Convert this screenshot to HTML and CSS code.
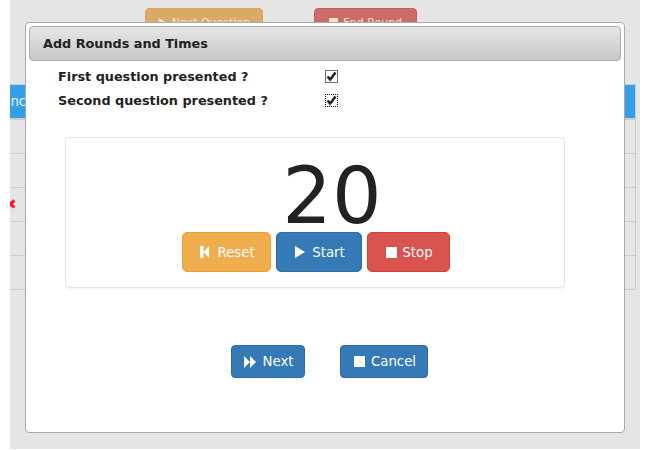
FILE: index.html
```html
<!DOCTYPE html>
<html lang="en">
<head>
<meta charset="utf-8">
<title>Add Rounds and Times</title>
<link rel="stylesheet" href="styles.css">
</head>
<body>
<div class="page">
  <div class="top-actions">
    <button class="btn dim dim-warning wide"><svg class="ico" viewBox="0 0 12 12"><path d="M1 0l10 6-10 6z"/></svg>Next Question</button>
    <button class="btn dim dim-danger"><svg class="ico" viewBox="0 0 12 12"><path d="M0 0h12v12H0z"/></svg>End Round</button>
  </div>
  <div class="table">
    <div class="table-head">Function</div>
    <div class="table-row"></div>
    <div class="table-row"></div>
    <div class="table-row"><span class="remove">&#10006;</span></div>
    <div class="table-row"></div>
    <div class="table-row"></div>
  </div>
</div>
<div class="dialog">
  <h1 class="dialog-title">Add Rounds and Times</h1>
  <div class="questions">
    <div class="question"><span class="question-label">First question presented ?</span>
      <span class="check"><svg viewBox="0 0 11 11"><path d="M1.500 5.500l2.700 3 5.300-7" /></svg></span></div>
    <div class="question"><span class="question-label">Second question presented ?</span>
      <span class="check focus"><svg viewBox="0 0 11 11"><path d="M1.500 5.500l2.700 3 5.300-7" /></svg></span></div>
  </div>
  <div class="timer">
    <div class="count">20</div>
    <div class="timer-actions">
      <button class="btn btn-warning reset"><svg class="ico ico-reset" viewBox="0 0 9 12"><path d="M0 0h3.500v12H0zM3.500 6L9 0v12z"/></svg>Reset</button>
      <button class="btn btn-primary start"><svg class="ico ico-play" viewBox="0 0 10 12"><path d="M0 0l10 6-10 6z"/></svg>Start</button>
      <button class="btn btn-danger stop"><svg class="ico ico-stop" viewBox="0 0 11 11"><path d="M0 0h11v11H0z"/></svg>Stop</button>
    </div>
  </div>
  <div class="dialog-actions">
    <button class="btn btn-primary small next"><svg class="ico ico-next" viewBox="0 0 12 12"><path d="M0 0l6 6-6 6zM6 0l6 6-6 6z"/></svg>Next</button>
    <button class="btn btn-primary small cancel"><svg class="ico ico-stop" viewBox="0 0 11 11"><path d="M0 0h11v11H0z"/></svg>Cancel</button>
  </div>
</div>
</body>
</html>
```
FILE: styles.css
```css
* { box-sizing: border-box; }
html, body { margin: 0; height: 100%; background: #fff; overflow: hidden; }
body { font-family: "DejaVu Sans", sans-serif; font-size: 12.8px; color: #222; }

.page { margin-left: 10px; width: 630px; height: 449px; background: #e5e5e5; padding-top: 8px; overflow: hidden; }
.top-actions { display: flex; padding-left: 135px; gap: 51px; }
.table { margin: 42px 4px 0 -20px; border: 1px solid #ccc; }
.table-head { height: 34px; background: #349fe8; color: #e8f4fc; font-size: 13.33px; line-height: 33px; padding-left: 4px; white-space: nowrap; overflow: hidden; border-bottom: 1px solid #cfcfcf; }
.table-row { height: 34px; border-top: 1px solid #cdcdcd; position: relative; }
.table-row:first-of-type { border-top: 0; }
.remove { position: absolute; left: 14px; top: 7px; color: #f01c2c; font-size: 14px; line-height: 18px; }

.btn { display: inline-flex; align-items: center; justify-content: center; font: 13.33px "DejaVu Sans", sans-serif; color: #fff; border: 1px solid transparent; border-radius: 4px; padding: 0 0 0 2px; }
.ico { width: 12px; height: 12px; fill: #fff; margin-right: 7px; flex: none; }
.dim { height: 34px; width: 103px; padding: 0 0 6px; font-size: 11px; color: #f1e3d0; }
.dim .ico { width: 9px; height: 9px; margin-right: 5px; fill: #f1e3d0; }
.dim.wide { width: 118px; }
.dim-warning { background: #dcaa68; border-color: #d9a35a; }
.dim-danger { background: #cc6c68; border-color: #c75f5b; }
.btn-warning { background: #f0ad4e; border-color: #eea236; }
.btn-primary { background: #337ab7; border-color: #2e6da4; }
.btn-danger { background: #d9534f; border-color: #d43f3a; }

.dialog { position: absolute; left: 25px; top: 22px; width: 600px; height: 411px; background: #fff; border: 1px solid #aaa; border-radius: 4px; padding: 3px; }
.dialog-title { margin: 0; height: 35px; padding-left: 13px; font-size: 12.8px; line-height: 33px; font-weight: bold; color: #222; border: 1px solid #aaa; border-radius: 4px; background: linear-gradient(#e6e6e6, #c8c8c8); }

.questions { padding: 3px 0 0 29px; }
.question { display: flex; align-items: center; height: 24px; }
.question-label { width: 267px; font-weight: bold; }
.check { display: block; width: 13px; height: 13px; border: 1px solid #707070; background: #fff; }
.check svg { display: block; width: 11px; height: 11px; fill: none; stroke: #222; stroke-width: 2.6; }
.check.focus { border: 1px dotted #000; }

.timer { margin: 25px 0 0 36px; width: 500px; height: 151px; border: 1px solid #e3e3e3; border-radius: 4px; box-shadow: 0 1px 1px rgba(0,0,0,.05); display: flex; flex-direction: column; align-items: center; }
.count { height: 94px; padding: 11px 0 0 34px; font-size: 78px; line-height: 94px; color: #222; }
.timer-actions { display: flex; gap: 5px; margin-left: 2px; }
.timer-actions .btn { height: 40px; border-radius: 5px; }
.reset { width: 89px; }
.start { width: 86px; }
.stop { width: 83px; }
.ico-reset { width: 9px; margin-right: 8px; }
.ico-play { width: 10px; margin-right: 7px; }
.ico-stop { width: 11px; height: 11px; margin-right: 5px; }

.dialog-actions { display: flex; gap: 35px; margin: 57px 0 0 202px; }
.small { height: 33px; }
.next { width: 74px; }
.ico-next { margin-right: 6px; }
.cancel { width: 88px; }
.cancel .ico-stop { margin-right: 6px; }
```
